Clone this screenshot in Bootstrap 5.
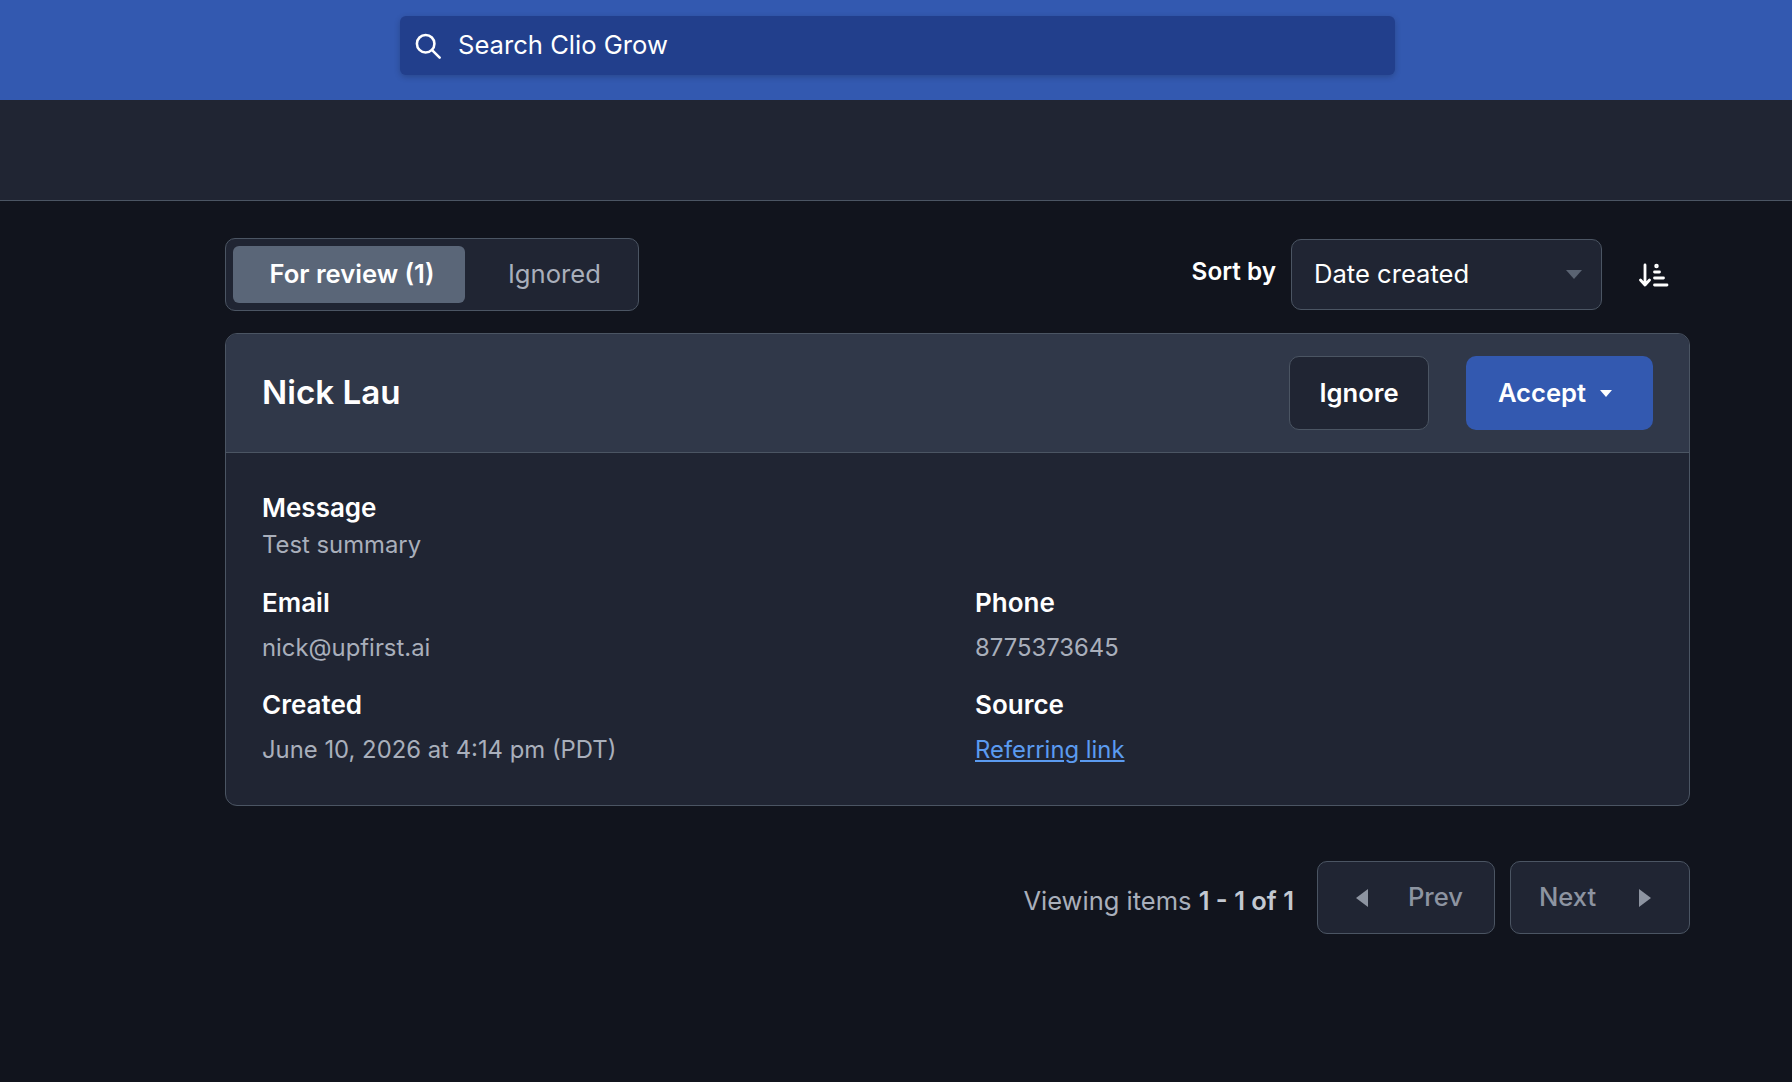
<!DOCTYPE html>
<html lang="en" data-bs-theme="dark">
<head>
  <title>Clio Grow - Inbox</title>
  <meta charset="UTF-8" />
  <meta name="viewport" content="width=device-width, initial-scale=1" />
  <link href="https://cdn.jsdelivr.net/npm/bootstrap@5.3.0/dist/css/bootstrap.min.css" rel="stylesheet" />
  <style>
    body { background-color: #11141d; font-family: Inter, "Liberation Sans", sans-serif; font-size: 24px; color: #a9afbb; min-height: 1082px; }
    .top-bar { height: 100px; background-color: #3359b0; padding-top: 16px; padding-left: 400px; }
    .search-box { width: 995px; height: 59px; background-color: #223f8c; border-radius: 6px; padding-left: 14px; gap: 16px; box-shadow: 0 2px 6px rgba(0, 0, 0, .2); }
    .search-box input { background: none; border: 0; outline: 0; color: #fff; font-size: 25.6px; flex: 1; padding: 0; }
    .search-box input::placeholder { color: #fff; opacity: 1; }
    .sub-bar { height: 101px; background-color: #202533; border-bottom: 1px solid #4b5563; }
    .main { padding: 37px 102px 0 225px; }
    .tabs { height: 73px; padding: 7px; background-color: #202533; border: 1px solid #4b5563; border-radius: 10px; }
    .tabs .nav-link { height: 100%; display: flex; align-items: center; border-radius: 6px; color: #a9afbb; font-size: 25.6px; padding: 0 30px 0 43px; }
    .tabs .nav-link.active { background-color: #5a6678; color: #fff; font-weight: 600; width: 232px; padding: 0 0 0 36.5px; }
    .sort-label { color: #fff; font-weight: 600; font-size: 24.3px; margin: 0 15px 6px 0; }
    .sort-select { width: 311px; height: 71px; background-color: #202533; border: 1px solid #4b5563; border-radius: 10px; color: #fff; font-size: 25.6px; padding: 0 19px 0 22px; }
    .sort-btn { margin: 0 21px 0 37px; }
    .lead-card { margin-top: 22px; background-color: #202533; border: 1px solid #4b5563; border-radius: 12px; --bs-card-inner-border-radius: 11px; }
    .lead-card .card-header { height: 119px; padding: 0 36px; background-color: #303849; border-bottom: 1px solid #4b5563; }
    .lead-name { font-size: 33.2px; font-weight: 600; color: #fff; margin: 0; }
    .lead-card .card-body { padding: 37px 36px 0; height: 352px; }
    .btn-act { height: 74px; border-radius: 10px; font-size: 25.6px; font-weight: 600; color: #fff; padding: 0; display: flex; align-items: center; justify-content: center; }
    .btn-ignore { width: 140px; background-color: #202533; border: 1px solid #4b5563; margin-right: 37px; }
    .btn-accept { width: 187px; background-color: #3359b0; border: 0; gap: 14px; padding-right: 9px; }
    .field-label { color: #fff; font-weight: 600; font-size: 26px; line-height: 36px; }
    .field-value { font-size: 23.85px; line-height: 36px; }
    .field-value a { color: #5b9bf0; }
    .message-value { margin-top: 1px; }
    .field-row { margin-top: 22px; }
    .field-row + .field-row { margin-top: 21px; }
    .field-row .field-value { margin-top: 9px; }
    .col-left { width: 713px; }
    .pager { margin-top: 55px; gap: 15px; }
    .pager-info { font-size: 25.5px; margin: 8px 8px 0 0; }
    .pager-info b { font-weight: 600; color: #c3c8d1; }
    .btn-page { height: 73px; background-color: #202533; border: 1px solid #4b5563; border-radius: 10px; color: #8d94a1; font-size: 25.6px; font-weight: 500; display: flex; align-items: center; justify-content: space-between; padding: 0 31px 0 38px; }
    .btn-prev { width: 178px; }
    .btn-next { width: 180px; padding: 0 38px 0 28px; }
  </style>
</head>
<body>

<div class="top-bar">
  <div class="search-box d-flex align-items-center">
    <svg width="28" height="28" viewBox="0 0 24 24" fill="none" stroke="#fff" stroke-width="2.2" stroke-linecap="round"><circle cx="10" cy="10" r="7.500"/><path d="M15.500 15.500 22 22"/></svg>
    <input type="text" placeholder="Search Clio Grow" />
  </div>
</div>
<div class="sub-bar"></div>

<div class="main">
  <div class="d-flex align-items-center">
    <ul class="nav tabs">
      <li class="nav-item h-100"><a class="nav-link active" href="#">For review (1)</a></li>
      <li class="nav-item h-100"><a class="nav-link" href="#">Ignored</a></li>
    </ul>
    <div class="ms-auto d-flex align-items-center">
      <label class="sort-label">Sort by</label>
      <div class="sort-select d-flex align-items-center justify-content-between">
        <span>Date created</span>
        <svg width="16" height="9" viewBox="0 0 16 9"><path d="M0 0h16L8 9z" fill="#5a6372"/></svg>
      </div>
      <div class="sort-btn d-flex">
        <svg width="30" height="24" viewBox="0 0 30 24" fill="none" stroke="#fff" stroke-linecap="round" stroke-linejoin="round" stroke-width="2.800"><path d="M6 2v20M1.500 17 6 22l4.500-5"/><path d="M15.500 9h5M15.500 15h9M15.500 22h12.500"/><circle cx="17.500" cy="3" r="1" stroke-width="2.500"/></svg>
      </div>
    </div>
  </div>

  <div class="card lead-card">
    <div class="card-header d-flex align-items-center">
      <h2 class="lead-name me-auto">Nick Lau</h2>
      <button class="btn btn-act btn-ignore">Ignore</button>
      <button class="btn btn-act btn-accept">Accept <svg width="12" height="7" viewBox="0 0 12 7"><path d="M0 0h12L6 7z" fill="#fff"/></svg></button>
    </div>
    <div class="card-body">
      <div class="field-label">Message</div>
      <div class="field-value message-value">Test summary</div>
      <div class="d-flex field-row">
        <div class="col-left">
          <div class="field-label">Email</div>
          <div class="field-value">nick@upfirst.ai</div>
        </div>
        <div>
          <div class="field-label">Phone</div>
          <div class="field-value">8775373645</div>
        </div>
      </div>
      <div class="d-flex field-row">
        <div class="col-left">
          <div class="field-label">Created</div>
          <div class="field-value">June 10, 2026 at 4:14 pm (PDT)</div>
        </div>
        <div>
          <div class="field-label">Source</div>
          <div class="field-value"><a href="#">Referring link</a></div>
        </div>
      </div>
    </div>
  </div>

  <div class="pager d-flex align-items-center justify-content-end">
    <span class="pager-info">Viewing items <b>1 - 1 of 1</b></span>
    <button class="btn btn-page btn-prev"><svg width="12" height="18" viewBox="0 0 12 18"><path d="M12 0v18L0 9z" fill="#8d94a1"/></svg>Prev</button>
    <button class="btn btn-page btn-next">Next<svg width="12" height="18" viewBox="0 0 12 18"><path d="M0 0v18L12 9z" fill="#8d94a1"/></svg></button>
  </div>
</div>

<script src="https://cdn.jsdelivr.net/npm/bootstrap@5.3.0/dist/js/bootstrap.bundle.min.js"></script>
</body>
</html>
